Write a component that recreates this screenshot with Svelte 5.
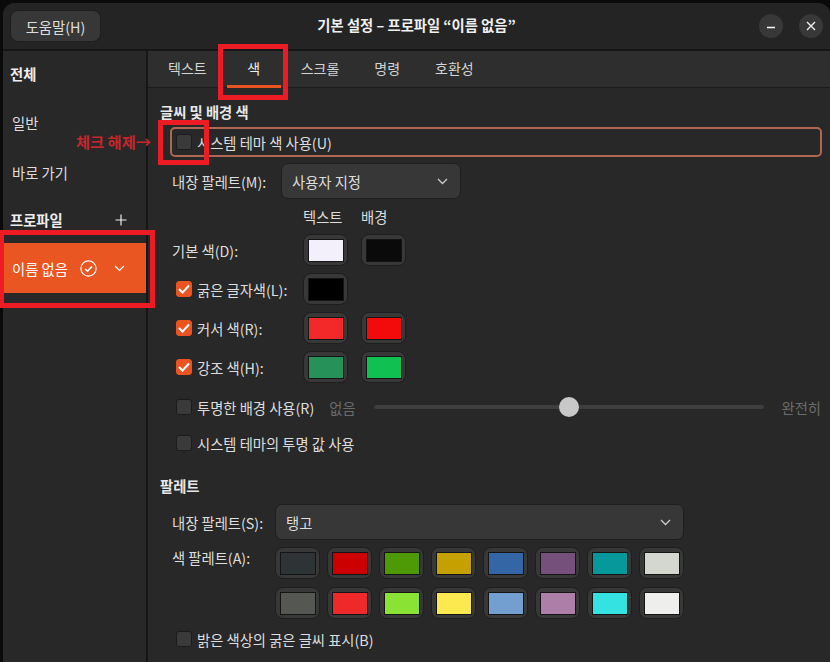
<script lang="ts">
    const tabs = ['텍스트', '색', '스크롤', '명령', '호환성']
    const colorRows = [
        { label: '기본 색(D):', check: false, text: '#f3f0fb', bg: '#0a0a0a' },
        { label: '굵은 글자색(L):', check: true, text: '#000000', bg: '' },
        { label: '커서 색(R):', check: true, text: '#f32929', bg: '#f30a0a' },
        { label: '강조 색(H):', check: true, text: '#26925a', bg: '#10c050' }
    ]
    const palette = [
        '#2e3436', '#cc0000', '#4e9a06', '#c4a000', '#3465a4', '#75507b', '#06989a', '#d3d7cf',
        '#555753', '#ef2929', '#8ae234', '#fce94f', '#729fcf', '#ad7fa8', '#34e2e2', '#eeeeec'
    ]
</script>

<div class="screen">
    <div class="window">
        <header>
            <button class="help">도움말(H)</button>
            <h1>기본 설정 – 프로파일 “이름 없음”</h1>
            <div class="controls">
                <span class="round">
                    <svg width="12" height="12" viewBox="0 0 12 12"><path d="M2 7.5h8" stroke="#fff" stroke-width="1.4"/></svg>
                </span>
                <span class="round">
                    <svg width="12" height="12" viewBox="0 0 12 12"><path d="M2 2l8 8M10 2l-8 8" stroke="#eee" stroke-width="1.4"/></svg>
                </span>
            </div>
        </header>

        <div class="body">
            <aside>
                <div class="side-row title">전체</div>
                <div class="side-row">일반</div>
                <div class="side-row">바로 가기</div>
                <div class="side-row title profile">
                    <span>프로파일</span>
                    <svg class="plus" width="12" height="12" viewBox="0 0 12 12"><path d="M6 .5v11M.5 6h11" stroke="#eee" stroke-width="1.2"/></svg>
                </div>
                <div class="side-row selected">
                    <span>이름 없음</span>
                    <svg class="ok" width="17" height="17" viewBox="0 0 17 17" fill="none" stroke="#fff" stroke-width="1.2">
                        <circle cx="8.5" cy="8.5" r="7.6"/>
                        <path d="M5 8.8l2.6 2.4L12 6.4" stroke-width="1.6"/>
                    </svg>
                    <svg class="down" width="11" height="7" viewBox="0 0 11 7" fill="none" stroke="#fff" stroke-width="1.2"><path d="M1 1l4.5 4.5L10 1"/></svg>
                </div>
            </aside>

            <main>
                <nav>
                    {#each tabs as tab}
                        <div class="tab" class:active={tab === '색'}>{tab}</div>
                    {/each}
                </nav>

                <section>
                    <h2>글씨 및 배경 색</h2>
                    <div class="system">
                        <span class="box"></span>
                        <span>시스템 테마 색 사용(U)</span>
                    </div>

                    <div class="field first">
                        <span class="label">내장 팔레트(M):</span>
                        <div class="combo small">
                            <span>사용자 지정</span>
                            <svg width="11" height="7" viewBox="0 0 11 7" fill="none" stroke="#ccc" stroke-width="1.3"><path d="M1 1l4.5 4.5L10 1"/></svg>
                        </div>
                    </div>

                    <div class="colors">
                        <span></span>
                        <span class="head">텍스트</span>
                        <span class="head">배경</span>
                        {#each colorRows as row}
                            <div class="color-label" class:checked={row.check}>
                                {#if row.check}
                                    <span class="box on">
                                        <svg width="12" height="10" viewBox="0 0 12 10" fill="none" stroke="#fff" stroke-width="2"><path d="M1 5l3.5 3.5L11 1.5"/></svg>
                                    </span>
                                {/if}
                                <span>{row.label}</span>
                            </div>
                            <div class="swatch"><i style="background:{row.text}"></i></div>
                            {#if row.bg}
                                <div class="swatch"><i style="background:{row.bg}"></i></div>
                            {:else}
                                <span></span>
                            {/if}
                        {/each}
                    </div>

                    <div class="check-row opacity">
                        <span class="box"></span>
                        <span>투명한 배경 사용(R)</span>
                        <span class="dim none">없음</span>
                        <div class="slider"><span class="thumb"></span></div>
                        <span class="dim">완전히</span>
                    </div>
                    <div class="check-row theme">
                        <span class="box"></span>
                        <span>시스템 테마의 투명 값 사용</span>
                    </div>

                    <h2 class="palette-title">팔레트</h2>
                    <div class="field">
                        <span class="label wide">내장 팔레트(S):</span>
                        <div class="combo large">
                            <span>탱고</span>
                            <svg width="11" height="7" viewBox="0 0 11 7" fill="none" stroke="#ccc" stroke-width="1.3"><path d="M1 1l4.5 4.5L10 1"/></svg>
                        </div>
                    </div>
                    <div class="field top">
                        <span class="label wide">색 팔레트(A):</span>
                        <div class="palette">
                            {#each palette as color}
                                <div class="swatch"><i style="background:{color}"></i></div>
                            {/each}
                        </div>
                    </div>
                    <div class="check-row bright">
                        <span class="box"></span>
                        <span>밝은 색상의 굵은 글씨 표시(B)</span>
                    </div>
                </section>
            </main>
        </div>
    </div>

    <!-- annotations drawn over the screenshot -->
    <div class="mark mark-tab"></div>
    <div class="mark mark-check"></div>
    <div class="mark mark-profile"></div>
    <div class="note">체크 해제→</div>
</div>

<style>
    :global(body) {
        margin: 0;
        background: #000;
    }
    .screen {
        position: relative;
        width: 830px;
        height: 662px;
        overflow: hidden;
        background: #0a0a0a;
        padding: 3px 0 0 3px;
        box-sizing: border-box;
        font-family: "Noto Sans CJK KR", "Noto Sans", sans-serif;
        font-size: 14.3px;
        color: #dedede;
    }
    .window {
        height: 100%;
        display: flex;
        flex-direction: column;
        background: #282828;
        border-radius: 12px 12px 0 0;
        overflow: hidden;
    }
    header {
        position: relative;
        flex: 0 0 46px;
        display: flex;
        align-items: center;
        justify-content: space-between;
        padding: 0 7px;
        background: #242424;
        border-bottom: 2px solid #161616;
    }
    .help {
        width: 91px;
        height: 32px;
        padding: 0;
        border: 1px solid #1e1e1e;
        border-radius: 8px;
        background: #373737;
        color: #dedede;
        font: inherit;
    }
    h1 {
        position: absolute;
        left: 0;
        right: 0;
        top: 12px;
        margin: 0;
        text-align: center;
        font-size: 14.3px;
        line-height: 20px;
        font-weight: 700;
        color: #f0f0f0;
        pointer-events: none;
    }
    .controls {
        display: flex;
        gap: 16px;
    }
    .round {
        width: 24px;
        height: 24px;
        border-radius: 50%;
        background: #383838;
        display: flex;
        align-items: center;
        justify-content: center;
    }
    .body {
        flex: 1;
        display: flex;
        min-height: 0;
    }
    aside {
        flex: 0 0 143px;
        background: #282828;
        border-right: 2px solid #161616;
    }
    .side-row {
        height: 50px;
        display: flex;
        align-items: center;
        padding-left: 9px;
    }
    .title {
        height: 46px;
        padding-left: 7px;
        padding-bottom: 1px;
        box-sizing: border-box;
        font-weight: 700;
        color: #eee;
    }
    .profile {
        justify-content: space-between;
        padding-right: 19px;
    }
    .selected {
        background: #ea5621;
        color: #fff;
    }
    .ok {
        margin-left: 12px;
    }
    .down {
        margin-left: 17px;
    }
    main {
        flex: 1;
        min-width: 0;
    }
    nav {
        height: 36px;
        display: flex;
        background: #2e2e2e;
        border-bottom: 1px solid #1c1c1c;
    }
    .tab {
        min-width: 54px;
        padding: 0 20px;
        box-sizing: border-box;
        height: 37px;
        line-height: 35px;
        text-align: center;
        font-size: 14px;
        color: #d4d4d4;
    }
    .tab:nth-child(2) {
        padding: 0;
    }
    .tab:nth-child(4) {
        padding: 0 15px;
    }
    .tab.active {
        border-bottom: 3px solid #e95420;
        color: #eee;
    }
    section {
        padding: 14px 8px 0 12px;
    }
    h2 {
        margin: 0;
        font-size: 14.3px;
        line-height: 20px;
        font-weight: 700;
        color: #e8e8e8;
    }
    .system {
        margin: 5px 0 0 10px;
        height: 30px;
        box-sizing: border-box;
        border: 2px solid #b0674f;
        border-radius: 5px;
        display: flex;
        align-items: center;
        gap: 5px;
        padding-left: 4px;
    }
    .box {
        flex: none;
        width: 16px;
        height: 16px;
        box-sizing: border-box;
        border: 1px solid #1c1c1c;
        border-radius: 3px;
        background: #3a3a3a;
        display: inline-flex;
        align-items: center;
        justify-content: center;
    }
    .box.on {
        background: #e95420;
        border-color: #e95420;
    }
    .field {
        display: flex;
        align-items: center;
        margin-left: 12px;
    }
    .field.first {
        margin-top: 6px;
    }
    .field.top {
        align-items: flex-start;
        margin-top: 7px;
    }
    .label {
        width: 109px;
        flex: none;
    }
    .label.wide {
        width: 103px;
    }
    .combo {
        height: 36px;
        box-sizing: border-box;
        display: flex;
        align-items: center;
        justify-content: space-between;
        padding: 0 12px 0 10px;
        background: #373737;
        border: 1px solid #1e1e1e;
        border-radius: 7px;
    }
    .combo.small {
        width: 180px;
    }
    .combo.large {
        width: 409px;
    }
    .colors {
        display: grid;
        grid-template-columns: 118px 45px 45px;
        grid-template-rows: 20px;
        grid-auto-rows: 32px;
        column-gap: 13px;
        row-gap: 7px;
        margin: 8px 0 0 12px;
        align-items: center;
    }
    .colors > .head {
        height: 20px;
        line-height: 20px;
        align-self: start;
        white-space: nowrap;
    }
    .color-label {
        display: flex;
        align-items: center;
        gap: 5px;
        white-space: nowrap;
    }
    .color-label.checked {
        margin-left: 4px;
    }
    .swatch {
        width: 45px;
        height: 32px;
        box-sizing: border-box;
        padding: 4px 3px 3px 4px;
        border: 1px solid #1e1e1e;
        border-radius: 8px;
        background: #383838;
        display: flex;
    }
    .swatch i {
        flex: 1;
        border: 1px solid #141414;
    }
    .check-row {
        display: flex;
        align-items: center;
        gap: 5px;
        margin-left: 16px;
        height: 20px;
    }
    .opacity {
        margin-top: 14px;
    }
    .theme {
        margin-top: 16px;
    }
    .bright {
        margin-top: 10px;
    }
    .dim {
        color: #6b6b6b;
    }
    .none {
        margin-left: 10px;
    }
    .slider {
        position: relative;
        width: 390px;
        height: 4px;
        margin: 0 13px;
        background: #3e3e3e;
        border-radius: 2px;
    }
    .thumb {
        position: absolute;
        left: 185px;
        top: -8px;
        width: 20px;
        height: 20px;
        border-radius: 50%;
        background: #c8c8c8;
    }
    .palette-title {
        margin-top: 23px;
    }
    h2.palette-title + .field {
        margin-top: 8px;
    }
    .palette {
        display: grid;
        grid-template-columns: repeat(8, 45px);
        column-gap: 7px;
        row-gap: 8px;
    }
    .mark {
        position: absolute;
        box-sizing: border-box;
        border: 5px solid #ed1c24;
    }
    .mark-tab {
        left: 218px;
        top: 44px;
        width: 70px;
        height: 56px;
    }
    .mark-check {
        left: 158px;
        top: 120px;
        width: 51px;
        height: 45px;
    }
    .mark-profile {
        left: -1px;
        top: 230px;
        width: 156px;
        height: 78px;
    }
    .note {
        position: absolute;
        left: 76px;
        top: 131px;
        font-size: 15.3px;
        line-height: 20px;
        font-weight: 700;
        color: #c4262c;
    }
</style>
